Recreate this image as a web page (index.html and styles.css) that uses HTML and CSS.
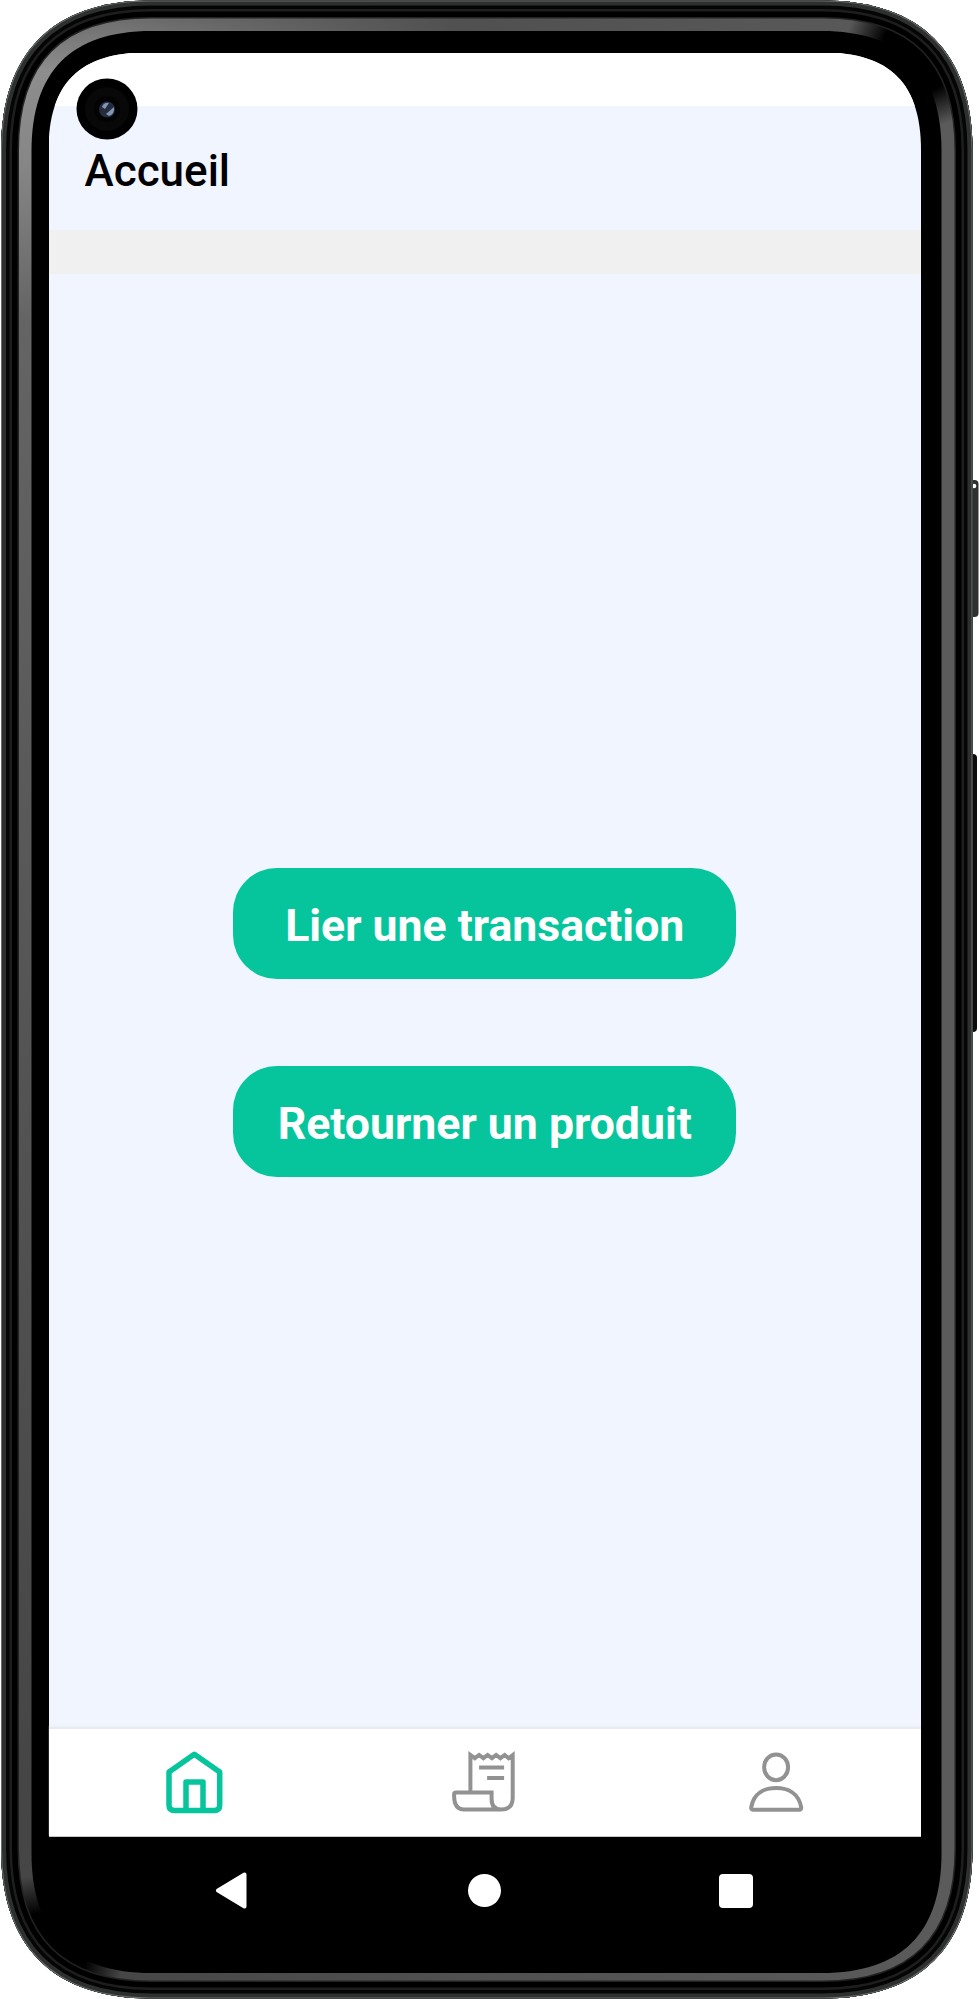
FILE: index.html
```html
<!DOCTYPE html>
<html lang="fr">
<head>
<meta charset="utf-8">
<title>Accueil</title>
<link rel="stylesheet" href="styles.css">
</head>
<body>
<div class="phone">
  <svg class="frame" viewBox="0 0 979 1999" aria-hidden="true">
    <defs>
      <linearGradient id="band" gradientUnits="userSpaceOnUse" x1="0" y1="0" x2="0" y2="1999">
        <stop offset="0" stop-color="#626262"/><stop offset=".035" stop-color="#8d8d8d"/><stop offset=".08" stop-color="#878787"/><stop offset=".16" stop-color="#646464"/><stop offset=".5" stop-color="#555"/><stop offset=".9" stop-color="#454545"/><stop offset="1" stop-color="#474747"/>
      </linearGradient>
      <linearGradient id="bandRight" gradientUnits="userSpaceOnUse" x1="120" y1="0" x2="972" y2="0">
        <stop offset="0" stop-color="#505050" stop-opacity="0"/><stop offset=".4" stop-color="#505050"/><stop offset="1" stop-color="#5b5b5b"/>
      </linearGradient>
      <radialGradient id="shade"><stop offset="0"/><stop offset=".52"/><stop offset="1" stop-opacity="0"/></radialGradient>
      <path id="shell" d="M1 150.500C1 52.500 53 .5 151 .5H822.500C920.500 .5 972.500 52.500 972.500 150.500V1848.500C972.500 1946.500 920.500 1998.500 822.500 1998.500H151C53 1998.500 1 1946.500 1 1848.500Z"/>
      <clipPath id="inside"><use href="#shell"/></clipPath>
    </defs>
    <rect x="970" y="480" width="8.500" height="137" rx="4" fill="#303030"/>
    <circle cx="974" cy="486" r="2.300" fill="#fff"/>
    <rect x="968" y="754" width="9" height="278" rx="4" fill="#0c0c0c"/>
    <g clip-path="url(#inside)" fill="none">
      <use href="#shell" fill="url(#band)"/>
      <rect width="979" height="1999" fill="url(#bandRight)"/>
      <circle cx="921" cy="52" r="76" fill="url(#shade)"/>
      <circle cx="44" cy="1955" r="80" fill="url(#shade)"/>
      <use href="#shell" stroke="#222" stroke-width="36"/>
      <use href="#shell" stroke="#000" stroke-width="33"/>
      <use href="#shell" stroke="#1e1e1e" stroke-width="22"/>
      <use href="#shell" stroke="#050505" stroke-width="17"/>
      <use href="#shell" stroke="#2e3030" stroke-width="10"/>
      <use href="#shell" stroke="#6b6d6b" stroke-width="2"/>
      <path d="M31.500 151C31.500 71 71.500 31 151.500 31H821.500C901.500 31 941.500 71 941.500 151V1853C941.500 1933 901.500 1973 821.500 1973H151.500C71.500 1973 31.500 1933 31.500 1853Z" fill="#000"/>
    </g>
  </svg>
  <div class="screen">
    <div class="status"></div>
    <header class="header"><h1 class="title">Accueil</h1></header>
    <div class="divider"></div>
    <main class="content">
      <button class="action">Lier une transaction</button>
      <button class="action">Retourner un produit</button>
    </main>
    <nav class="tabs">
      <a class="tab tab-active">
        <svg width="64" height="66" viewBox="0 0 64 66" fill="none" stroke="currentColor" stroke-width="5.500" stroke-linejoin="round">
          <path d="M7 22 32.300 4.300 57.700 22V55Q57.700 60.500 52.200 60.500H12.500Q7 60.500 7 55Z"/>
          <path d="M24 60.500V32H41V60.500"/>
        </svg>
      </a>
      <a class="tab">
        <svg width="66" height="66" viewBox="0 0 66 66" fill="none" stroke="currentColor" stroke-width="4">
          <g transform="translate(-1.900 2)">
            <path d="M20.300 40V3L24.700 6.200 29 3 33.300 6.200 37.500 3 41.800 6.200 46 3 50.300 6.200 54.600 3 58.500 6.200 62.600 3V46Q62.600 57.500 51 57.500H14Q4 57.500 4 43.500V42Q4 40.500 6 40.500H41.500V47Q41.500 57.500 51 57.500"/>
            <path d="M29 15.500H54M37 26H54"/>
          </g>
        </svg>
      </a>
      <a class="tab">
        <svg width="60" height="66" viewBox="0 0 60 66" fill="none" stroke="currentColor" stroke-width="4">
          <ellipse cx="30.100" cy="17.300" rx="12" ry="12.900"/>
          <path d="M5.200 57.400C7.500 43 18.500 38 30.100 38S52.700 43 55.200 57.400Q55.400 59.700 53.200 59.700H7Q4.900 59.700 5.200 57.400Z" stroke-linejoin="round"/>
        </svg>
      </a>
    </nav>
  </div>
  <nav class="system">
    <svg width="33" height="37" viewBox="0 0 33 37"><path d="M29.500 2.500V34.500L3 18.500Z" fill="#fff" stroke="#fff" stroke-width="4" stroke-linejoin="round"/></svg>
    <span class="sys-home"></span>
    <span class="sys-recent"></span>
  </nav>
  <svg class="camera" viewBox="0 0 62 62" aria-hidden="true">
    <circle cx="31" cy="31" r="30.500" fill="#000"/><circle cx="31" cy="31" r="22" fill="#080808"/><circle cx="31" cy="31" r="13" fill="#030304"/>
    <circle cx="31" cy="31.500" r="8" fill="#242d3d"/><path d="M26 29Q28 24 33 25L29 31ZM30 36 38 29Q39 36 33 38Z" fill="#8195b5"/>
  </svg>
</div>
</body>
</html>
```
FILE: styles.css
```css
* { box-sizing: border-box; }
body { margin: 0; background: #fff; font-family: Roboto, "Liberation Sans", sans-serif; }
.phone { position: relative; width: 979px; height: 1999px; padding: 52.5px 58px 0 48.5px; overflow: hidden; }
.frame { position: absolute; inset: 0; width: 979px; height: 1999px; }
.screen { position: relative; display: flex; flex-direction: column; height: 1784px; background: #f0f5ff; clip-path: path("M0 98C0 31 31 0 98 0H774.5C841.5 0 872.5 31 872.5 98V1784H0Z"); }
.status { height: 53.5px; background: #fff; }
.header { height: 124px; padding: 39px 36px 0; }
.title { margin: 0; font-size: 44px; line-height: 52px; font-weight: 500; color: #000; }
.divider { height: 44px; background: #f0f0f0; }
.content { flex: 1; display: flex; flex-direction: column; align-items: center; gap: 87.5px; padding-top: 593.5px; }
.action { width: 503px; height: 111px; padding: 5px 0 0; border: 0; border-radius: 44px; background: #06c59c; color: #fff; font: 700 44.6px/52px Roboto, "Liberation Sans", sans-serif; white-space: nowrap; }
.tabs { display: grid; grid-template-columns: repeat(3, 1fr); height: 109.5px; padding-top: 21px; background: #fff; border-top: 2px solid #e9ebf0; box-shadow: 0 -1px 2px #e9edf6; }
.tab { display: flex; justify-content: center; color: #929292; }
.tab-active { color: #06c59c; }
.system { position: relative; display: flex; justify-content: space-between; align-items: center; height: 108px; padding: 0 168px 0 166px; }
.sys-home { width: 33px; height: 33px; margin-left: 3px; border-radius: 50%; background: #fff; }
.sys-recent { width: 34px; height: 34px; border-radius: 4px; background: #fff; }
.camera { position: absolute; left: 76px; top: 77.5px; width: 62px; height: 62px; }
```
